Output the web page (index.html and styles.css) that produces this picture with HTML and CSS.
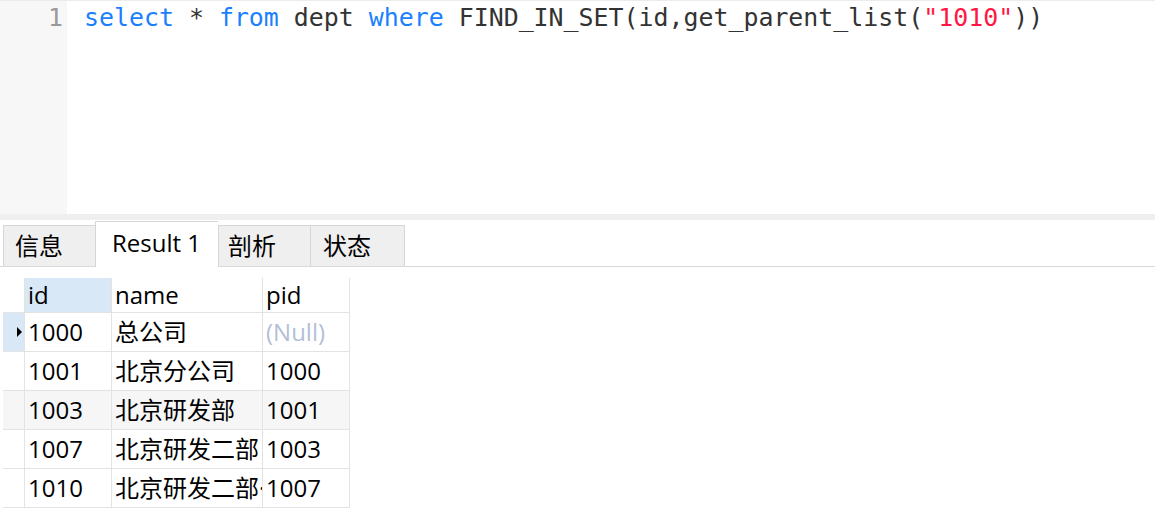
FILE: index.html
```html
<!DOCTYPE html>
<html lang="zh-CN">
<head>
<meta charset="utf-8">
<title>Query</title>
<link rel="stylesheet" href="styles.css">
</head>
<body>
<div class="editor">
  <div class="gutter"><div class="ln">1</div></div>
  <div class="code"><span class="kw">select</span> * <span class="kw">from</span> dept <span class="kw">where</span> FIND_IN_SET(id,get_parent_list(<span class="str">"1010"</span>))</div>
</div>
<div class="band"></div>
<div class="tabs">
  <div class="tab t1">信息</div>
  <div class="tab active">Result 1</div>
  <div class="tab t3">剖析</div>
  <div class="tab t4">状态</div>
</div>
<div class="results">
  <div class="grid">
    <div class="cell ind hdr"></div>
    <div class="cell hdr sel">id</div>
    <div class="cell hdr">name</div>
    <div class="cell hdr last">pid</div>

    <div class="cell ind cur"><span class="tri"></span></div>
    <div class="cell">1000</div>
    <div class="cell">总公司</div>
    <div class="cell last null">(Null)</div>

    <div class="cell ind"></div>
    <div class="cell">1001</div>
    <div class="cell">北京分公司</div>
    <div class="cell last">1000</div>

    <div class="cell ind alt"></div>
    <div class="cell alt">1003</div>
    <div class="cell alt">北京研发部</div>
    <div class="cell last alt">1001</div>

    <div class="cell ind"></div>
    <div class="cell">1007</div>
    <div class="cell">北京研发二部</div>
    <div class="cell last">1003</div>

    <div class="cell ind"></div>
    <div class="cell">1010</div>
    <div class="cell">北京研发二部<span class="dot">·</span></div>
    <div class="cell last">1007</div>
  </div>
</div>
</body>
</html>
```

FILE: styles.css
```css
* { box-sizing: border-box; }
html, body { margin: 0; padding: 0; background: #ffffff; }
body {
  width: 1155px;
  height: 520px;
  overflow: hidden;
  font-family: "Open Sans", "Noto Sans CJK SC", sans-serif;
  font-size: 24px;
  color: #000;
}

.editor {
  display: flex;
  height: 214px;
  border-top: 1px solid #ececec;
}
.gutter {
  width: 67px;
  background: #f7f7f7;
  padding-right: 4px;
}
.ln, .code {
  font-family: "DejaVu Sans Mono", "Liberation Mono", monospace;
  font-size: 24.9px;
  line-height: 34px;
  white-space: pre;
}
.ln { text-align: right; color: #9a9a9a; }
.code { padding-left: 17px; color: #333; }
.kw { color: #1a80ff; }
.str { color: #ff1744; }

.band { height: 6px; background: #efefef; }

.tabs {
  display: flex;
  align-items: flex-end;
  height: 47px;
  padding-left: 3px;
  border-bottom: 1px solid #d9d9d9;
}
.tab {
  height: 41px;
  border-top: 1px solid #d6d6d6;
  border-left: 1px solid #d6d6d6;
  background: #efefef;
  line-height: 40px;
  white-space: nowrap;
}
.t1 { width: 92px; padding-left: 11px; }
.t3 { width: 92px; padding-left: 9px; }
.t4 { width: 95px; padding-left: 12px; border-right: 1px solid #d6d6d6; }
.tab.active {
  width: 123px;
  height: 46px;
  margin-bottom: -1px;
  background: #ffffff;
  padding-left: 16px;
  line-height: 42px;
  position: relative;
}

.results { padding: 11px 0 0 3px; }
.grid {
  display: grid;
  grid-template-columns: 21px 87px 151px 88px;
  grid-auto-rows: 39px;
  grid-template-rows: 35px;
}
.cell {
  border-left: 1px solid #e3e3e3;
  border-bottom: 1px solid #e3e3e3;
  padding-left: 3px;
  line-height: 38px;
  white-space: nowrap;
  overflow: hidden;
}
.cell.hdr { line-height: 34px; }
.cell.ind { border-left: none; padding: 0; position: relative; }
.cell.last { border-right: 1px solid #e3e3e3; }
.cell.sel, .cell.cur { background: #d9e8f7; }
.cell.alt { background: #f6f6f6; }
.null { color: #b4bfd6; }
.dot { letter-spacing: -3px; }
.tri {
  position: absolute;
  left: 14px;
  top: 14px;
  width: 0;
  height: 0;
  border-top: 5px solid transparent;
  border-bottom: 5px solid transparent;
  border-left: 5px solid #000;
}
```
